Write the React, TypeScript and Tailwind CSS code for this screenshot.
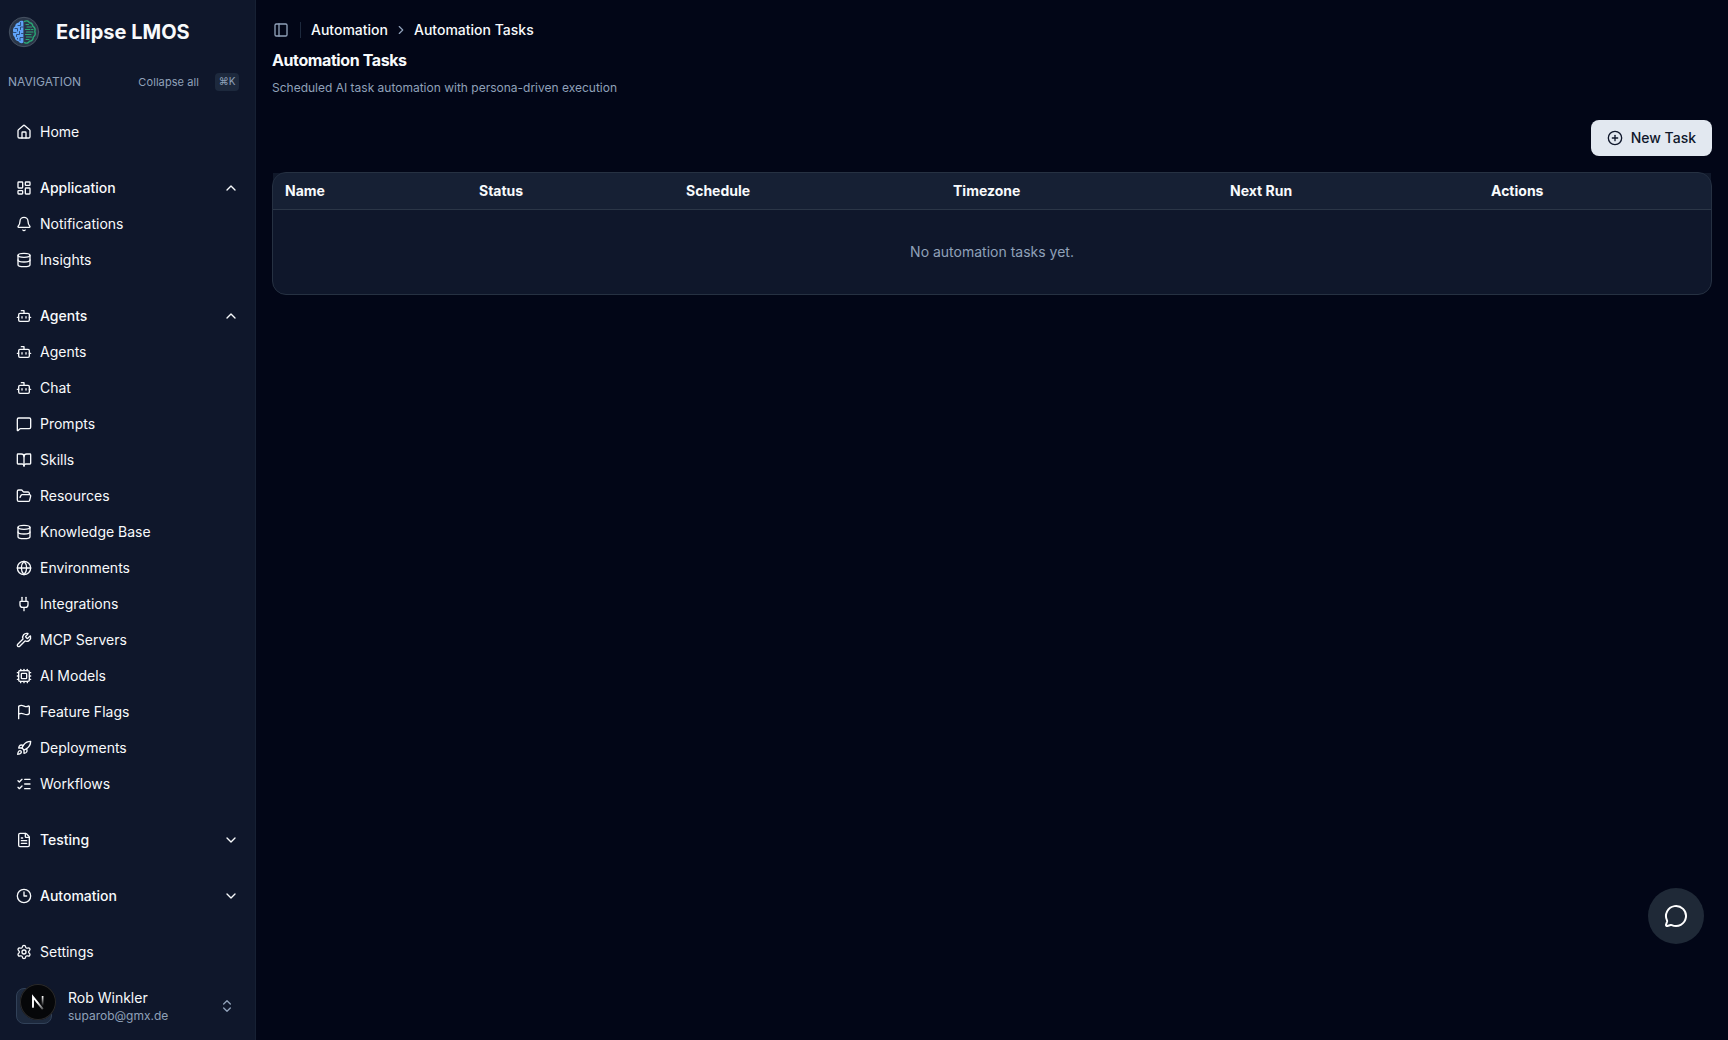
import React from 'react';
import {
  Bell,
  BookOpen,
  Bot,
  ChevronDown,
  ChevronRight,
  ChevronUp,
  ChevronsUpDown,
  CirclePlus,
  Clock3,
  Cpu,
  Database,
  FileText,
  Flag,
  FolderOpen,
  Globe,
  House,
  LayoutDashboard,
  ListChecks,
  MessageCircle,
  MessageSquare,
  PanelLeft,
  Plug,
  Rocket,
  Settings,
  Wrench,
  type LucideIcon,
} from 'lucide-react';

interface NavItem {
  title: string;
  icon: LucideIcon;
}

interface NavGroup extends NavItem {
  id: string;
  // undefined = plain link without a chevron
  open?: boolean;
  items?: NavItem[];
}

const groups: NavGroup[] = [
  { id: 'home', title: 'Home', icon: House },
  {
    id: 'application',
    title: 'Application',
    icon: LayoutDashboard,
    open: true,
    items: [
      { title: 'Notifications', icon: Bell },
      { title: 'Insights', icon: Database },
    ],
  },
  {
    id: 'agents',
    title: 'Agents',
    icon: Bot,
    open: true,
    items: [
      { title: 'Agents', icon: Bot },
      { title: 'Chat', icon: Bot },
      { title: 'Prompts', icon: MessageSquare },
      { title: 'Skills', icon: BookOpen },
      { title: 'Resources', icon: FolderOpen },
      { title: 'Knowledge Base', icon: Database },
      { title: 'Environments', icon: Globe },
      { title: 'Integrations', icon: Plug },
      { title: 'MCP Servers', icon: Wrench },
      { title: 'AI Models', icon: Cpu },
      { title: 'Feature Flags', icon: Flag },
      { title: 'Deployments', icon: Rocket },
      { title: 'Workflows', icon: ListChecks },
    ],
  },
  { id: 'testing', title: 'Testing', icon: FileText, open: false },
  { id: 'automation', title: 'Automation', icon: Clock3, open: false },
  { id: 'settings', title: 'Settings', icon: Settings },
];

const columns = [
  { label: 'Name', width: 'w-[194px]' },
  { label: 'Status', width: 'w-[207px]' },
  { label: 'Schedule', width: 'w-[267px]' },
  { label: 'Timezone', width: 'w-[277px]' },
  { label: 'Next Run', width: 'w-[261px]' },
  { label: 'Actions', width: 'w-[232px]' },
];

const BrainLogo: React.FC = () => (
  <svg width="32" height="32" viewBox="0 0 32 32" fill="none" strokeLinecap="round" strokeLinejoin="round">
    <circle cx="16" cy="16" r="14.7" fill="#2a3648" stroke="#475262" strokeWidth="1" />
    <path
      d="M15.4 5.2C13.4 4.4 11.6 5 10.8 6.5 8.6 6.7 7.3 8.3 7.2 10.2 5.3 11.5 4.5 13.5 5.2 15.6 4.4 17.7 5 19.9 6.6 21 6.8 23.4 8.4 25 10.4 25.2 11.6 27.2 13.8 27.6 15.4 26.6Z"
      fill="#60a5fa"
    />
    <path
      d="M12.6 6.5V9.5H10M15.3 11H12.5V13.5M7 12.5H9.5V15M5.5 16.5H8M11.5 15.5V18.5H8.5V20.5M15.3 17.5H13.5M15.3 21.5H12V24.5M9.5 23V22.3"
      stroke="#26456f"
      strokeWidth="0.9"
    />
    <path
      d="M16.6 5.4C18.6 4.4 20.6 5 21.4 6.7 23.4 6.8 24.7 8.3 24.8 10.2 26.8 11.5 27.5 13.5 26.8 15.6 27.6 17.7 27 19.9 25.3 21 25.2 23.4 23.6 25 21.6 25.2 20.4 27.2 18.2 27.6 16.6 26.6"
      stroke="#2aa876"
      strokeWidth="1.4"
    />
    <path
      d="M18 8.5H20.5M19 11H23.5M17.5 13.5H22M23.5 13.5H25M18.5 16H25M17.5 18.5H23M18.5 21H23.5M18 23.5H21"
      stroke="#2aa876"
      strokeWidth="1.1"
    />
  </svg>
);

const NavRow: React.FC<{ item: NavItem; open?: boolean }> = ({ item, open }) => {
  const Icon = item.icon;
  return (
    <div
      className={`flex h-9 items-center gap-2 px-2 text-sm text-slate-50 ${open !== undefined ? 'font-medium' : ''}`}
    >
      <Icon size={16} className="shrink-0" />
      <span>{item.title}</span>
      {open === true && <ChevronUp size={16} className="ml-auto" />}
      {open === false && <ChevronDown size={16} className="ml-auto" />}
    </div>
  );
};

const Sidebar: React.FC = () => (
  <aside className="flex w-64 shrink-0 flex-col border-r border-[#162033] bg-slate-900">
    <div className="flex h-16 items-center gap-4 px-2">
      <BrainLogo />
      <span className="text-xl font-bold text-slate-50">Eclipse LMOS</span>
    </div>

    <div className="flex h-9 items-center pl-2 pr-4 text-slate-400">
      <span className="text-xs">NAVIGATION</span>
      <span className="ml-auto text-[11px] tracking-[0.08px]">Collapse all</span>
      <kbd className="ml-4 flex h-[18px] w-6 items-center justify-center rounded bg-slate-800 pb-px font-['Inter','DejaVu_Sans',sans-serif] text-[10px]">
        ⌘K
      </kbd>
    </div>

    <nav className="flex flex-1 flex-col gap-5 px-2 pt-[14px]">
      {groups.map((group) => (
        <div key={group.id}>
          <NavRow item={group} open={group.open} />
          {group.items?.map((item) => (
            <NavRow key={item.title} item={item} />
          ))}
        </div>
      ))}
    </nav>

    <div className="flex h-[68px] items-center gap-4 px-4">
      <div className="relative h-9 w-9 rounded-lg border border-slate-700 bg-slate-800">
        <div className="absolute -top-[5px] left-[3px] h-9 w-9 rounded-full bg-[#060709] ring-1 ring-inset ring-[#2a2a2c]">
          <svg width="36" height="36" viewBox="0 0 36 36" fill="none">
            <defs>
              <linearGradient id="stem" x1="0" y1="12" x2="0" y2="22" gradientUnits="userSpaceOnUse">
                <stop stopColor="#fff" />
                <stop offset="1" stopColor="#fff" stopOpacity="0" />
              </linearGradient>
              <linearGradient id="slash" x1="18" y1="18" x2="24" y2="26" gradientUnits="userSpaceOnUse">
                <stop stopColor="#fff" />
                <stop offset="1" stopColor="#fff" stopOpacity="0.2" />
              </linearGradient>
            </defs>
            <path d="M13 23.8V13L22.8 25.2" stroke="url(#slash)" strokeWidth="1.9" />
            <path d="M22.6 12V22" stroke="url(#stem)" strokeWidth="1.7" />
          </svg>
        </div>
      </div>
      <div className="flex-1 pt-0.5">
        <div className="text-sm leading-[18px] text-slate-50">Rob Winkler</div>
        <div className="text-xs leading-[18px] text-slate-400">suparob@gmx.de</div>
      </div>
      <ChevronsUpDown size={16} className="mr-1 text-slate-400" />
    </div>
  </aside>
);

const TaskTable: React.FC = () => (
  <div className="mt-4 h-[123px] rounded-[14px] border border-[#263142] bg-slate-900">
    <table className="w-full table-fixed border-separate border-spacing-0 text-sm">
      <thead className="bg-slate-800/50">
        <tr>
          {columns.map((column) => (
            <th
              key={column.label}
              className={`h-[37px] border-b border-[#2b3647] px-3 text-left font-bold text-slate-50 ${column.width}`}
            >
              {column.label}
            </th>
          ))}
        </tr>
      </thead>
      <tbody>
        <tr>
          <td colSpan={6} className="h-[84px] text-center text-slate-400">
            No automation tasks yet.
          </td>
        </tr>
      </tbody>
    </table>
  </div>
);

const App: React.FC = () => {
  return (
    <div className="flex h-screen overflow-hidden bg-[#020617] font-['Inter',sans-serif] text-slate-50">
      <Sidebar />

      <main className="flex-1 px-4 pt-[18px]">
        <div className="flex h-6 items-center text-sm font-medium">
          <PanelLeft size={16} className="ml-px text-slate-400" />
          <div className="ml-[11px] mr-[10px] h-4 w-px bg-slate-800" />
          <span>Automation</span>
          <ChevronRight size={14} className="mx-1.5 text-slate-400" />
          <span>Automation Tasks</span>
        </div>
        <h1 className="mt-1.5 text-base font-bold leading-6 tracking-tight">Automation Tasks</h1>
        <p className="mt-2 text-xs text-slate-400">Scheduled AI task automation with persona-driven execution</p>

        <div className="mt-6 flex justify-end">
          <button className="flex h-9 items-center gap-2 rounded-lg bg-slate-200 px-4 text-sm font-medium text-slate-900">
            <CirclePlus size={16} />
            New Task
          </button>
        </div>

        <TaskTable />
      </main>

      {/* Floating chat launcher */}
      <button className="absolute bottom-24 right-6 flex h-14 w-14 items-center justify-center rounded-full bg-[#1f2937] text-white">
        <MessageCircle size={24} />
      </button>
    </div>
  );
};

export default App;
